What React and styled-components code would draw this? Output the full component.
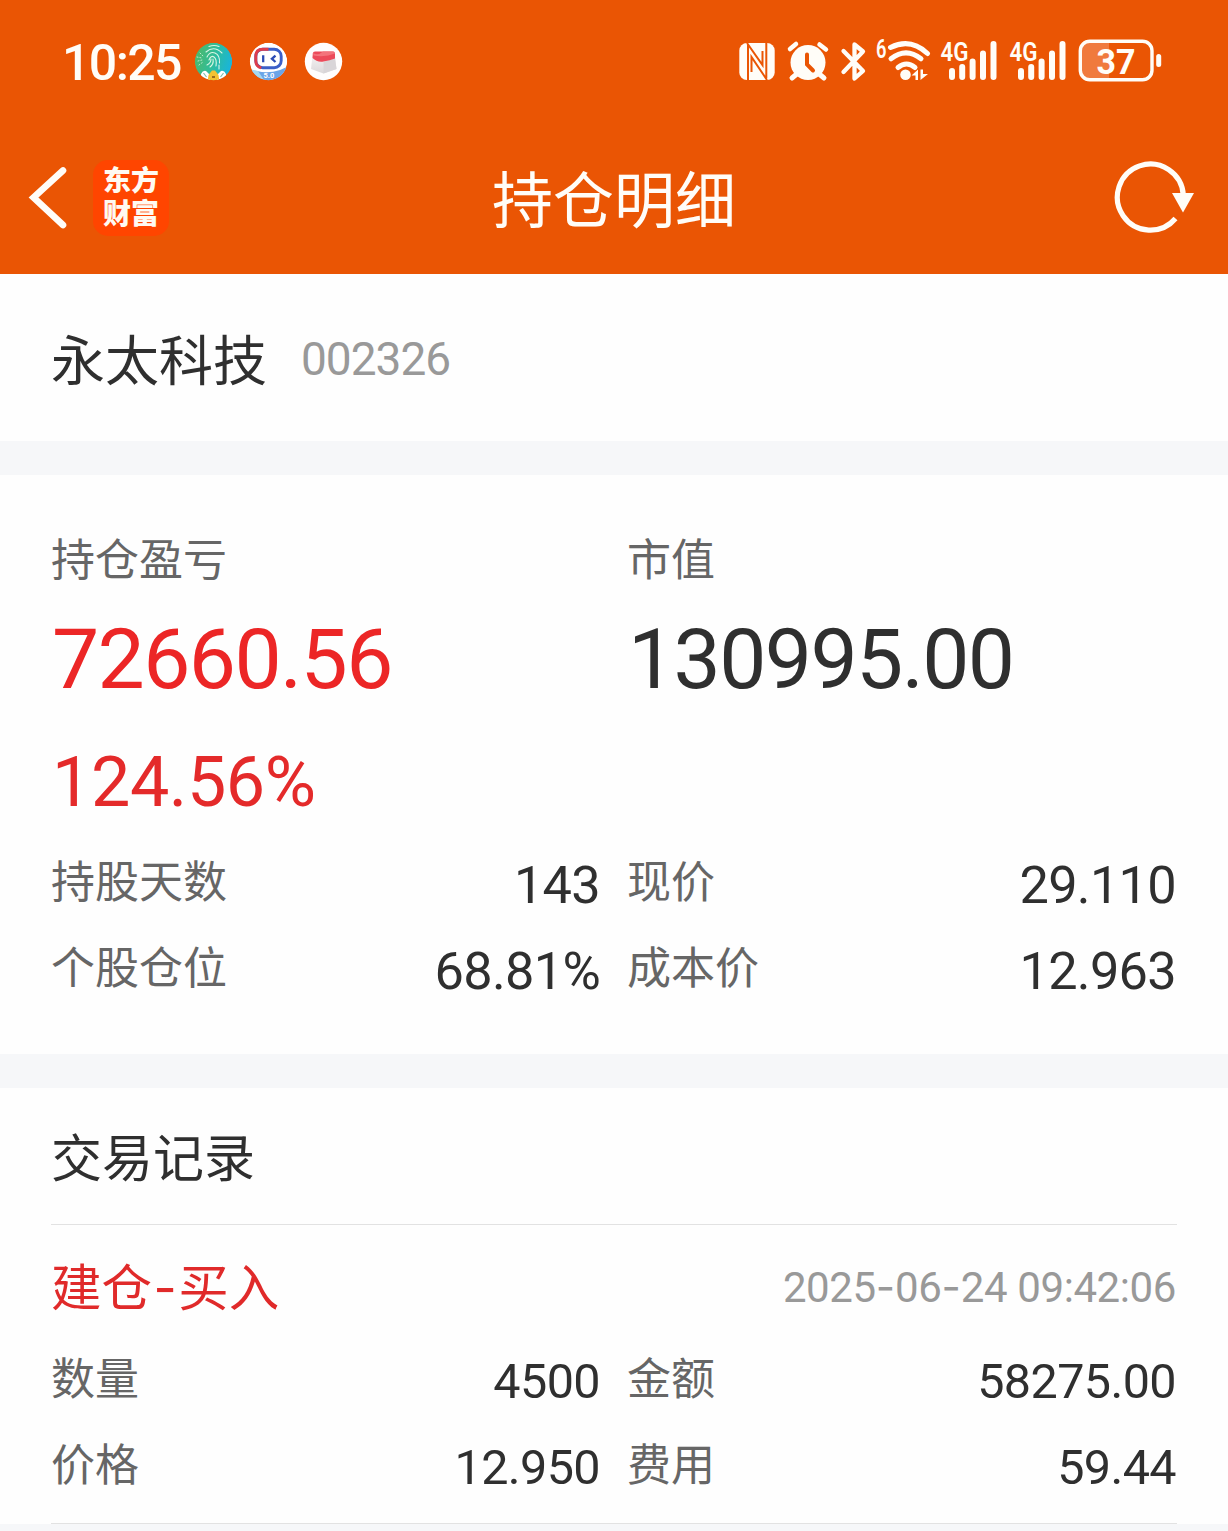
import React from "react";
import styled, { createGlobalStyle } from "styled-components";

const Global = createGlobalStyle`
  body { margin: 0; background: #fff; }
  * { box-sizing: border-box; }
`;
const cjk = `"Noto Sans CJK SC", sans-serif`;
const latin = `Roboto, "Noto Sans CJK SC", sans-serif`;

const Page = styled.div`
  width: 1228px;
  height: 1531px;
  overflow: hidden;
  display: flex;
  flex-direction: column;
  background: #fefefe;
  font-family: ${cjk};
  color: #2f2f2f;
  white-space: nowrap;
`;
const StatusBar = styled.header`
  height: 124px;
  flex: none;
  padding: 0 64px 0 62px;
  display: flex;
  align-items: center;
  justify-content: space-between;
  background: #ea5504;
`;
const StatusGroup = styled.div`
  display: flex;
  align-items: center;
  height: 64px;
`;
const Clock = styled.span`
  width: 132px;
  padding-top: 2px;
  font: 500 50px/64px ${latin};
  letter-spacing: -1.6px;
  color: #fffdf8;
`;
const NavBar = styled.nav`
  height: 150px;
  flex: none;
  display: grid;
  grid-template-columns: 250px 1fr 250px;
  align-items: center;
  background: #ea5504;
`;
const NavLeft = styled.div`
  display: flex;
  align-items: center;
  padding-left: 26px;
  gap: 23px;
`;
const Logo = styled.div`
  width: 76px;
  height: 76px;
  margin-top: -2px;
  padding-top: 3px;
  border-radius: 15px;
  background: #ff4500;
  color: #fffaf2;
  text-align: center;
  font: 900 28px/33px ${cjk};
`;
const NavTitle = styled.h1`
  margin: 0;
  padding-bottom: 5px;
  text-align: center;
  font: 400 61px/72px ${cjk};
  color: #fffdf8;
`;
const NavRight = styled.div`
  display: flex;
  justify-content: flex-end;
  padding: 0 30px 2px 0;
`;
const Stock = styled.section`
  height: 167px;
  flex: none;
  padding: 0 51px;
  display: flex;
  align-items: center;
  gap: 34px;
`;
const StockName = styled.span`
  font: 400 54px/72px ${cjk};
`;
const Num = styled.span`
  font: 400 ${(p) => p.$size}px/${(p) => p.$line || 74}px ${latin};
  font-kerning: none;
  letter-spacing: ${(p) => p.$track || 0}px;
  color: ${(p) => p.$color || "#2f2f2f"};
`;
const StockCode = styled(Num)`
  padding-top: 3px;
`;
const Gap = styled.div`
  height: 34px;
  flex: none;
  background: #f6f7f9;
`;
const Summary = styled.section`
  height: 579px;
  flex: none;
  padding: 48px 51px 0;
`;
const Columns = styled.div`
  display: grid;
  grid-template-columns: 549px 549px;
  column-gap: 27px;
`;
const Metric = styled.div`
  display: flex;
  flex-direction: column;
  gap: 2px;
`;
const Figure = styled(Num)`
  padding-left: 1px;
`;
const Label = styled.span`
  font: 400 44px/68px ${cjk};
  color: #666;
`;
const Rows = styled.div`
  padding-top: ${(p) => p.$top}px;
`;
const Row = styled(Columns)`
  height: 86px;
`;
const Cell = styled.div`
  display: flex;
  justify-content: space-between;
`;
const SectionTitle = styled.h2`
  margin: 0;
  height: 136px;
  flex: none;
  padding-left: 51px;
  font: 400 51px/135px ${cjk};
`;
const Divider = styled.div`
  height: 1px;
  flex: none;
  margin: 0 51px;
  background: #e2e2e2;
`;
const Trade = styled.section`
  height: 298px;
  flex: none;
  padding: 25px 51px 0;
`;
const TradeHead = styled.div`
  height: 86px;
  width: 1125px;
  display: flex;
  justify-content: space-between;
`;
const TradeType = styled.span`
  font: 400 50.5px/68px ${cjk};
  color: #e02a2a;
`;
const Dash = styled.span`
  font-family: Inter, sans-serif;
  letter-spacing: 0;
  padding: 0 ${(p) => p.$pad || 0}px;
`;
const Footer = styled.div`
  flex: 1;
  background: #f6f7f9;
`;

const W = "#fffdf8";

function AppIcons() {
  return (
    <svg width="150" height="40" viewBox="194 42 150 40">
      <defs>
        <linearGradient id="fp" x1="0" y1="0.3" x2="1" y2="0.6">
          <stop offset="0" stopColor="#4fb868" />
          <stop offset="0.5" stopColor="#2fbd9b" />
          <stop offset="1" stopColor="#18b4df" />
        </linearGradient>
        <linearGradient id="box" x1="0" y1="0" x2="0" y2="1">
          <stop offset="0" stopColor="#f3f0f1" />
          <stop offset="1" stopColor="#dcd8da" />
        </linearGradient>
        <clipPath id="c1"><circle cx="213.5" cy="61.5" r="18.7" /></clipPath>
        <clipPath id="c2"><circle cx="268.5" cy="61.5" r="18.7" /></clipPath>
      </defs>
      <g clipPath="url(#c1)">
        <circle cx="213.5" cy="61.5" r="18.7" fill="url(#fp)" />
        <g fill="none" stroke="#d9f5e4" strokeWidth="1.1" strokeLinecap="round">
          <path d="M209 46.5q5-2 10 0M206 52q8-7 16 1M207 57q3-6 8-4q5 2 4.5 10M209 60q2-5 5-3q3 2 2 9M207 65q4-2 4-6M210 67q4-3 3-8M219 65v4" />
          <path d="M197 57l5 1M198 61l4-1M200 53l3 3M199 65l4-3" strokeDasharray="1 2" strokeWidth="0.8" />
        </g>
        <path d="M201 74q2-4 5-3l4 4v7h-9zM226 74q-2-4-5-3l-4 4v7h9z" fill="#fff" />
        <path d="M208.5 75l3.5-4.5h3l3.5 4.5 1 7h-12z" fill="#f3c233" />
        <path d="M212 77h3" stroke="#9b6b1c" strokeWidth="2" />
        <path d="M203.5 73l3 4M223.5 73l-3 4" stroke="#7ac0ae" strokeWidth="1.2" />
      </g>
      <g clipPath="url(#c2)">
        <circle cx="268.5" cy="61.5" r="18.7" fill="#fff" />
        <path d="M249 70l8 1q11 3 23-1l9-4v16h-40z" fill="#6ba5e7" />
        <path d="M249 69l9 2 6 9h-15z" fill="#a6d8ee" />
        <rect x="255.8" y="49.2" width="25.4" height="18.5" rx="7" fill="#fff" stroke="#3b5fc8" strokeWidth="2.9" />
        <path d="M268.5 49.2h-5.7q-7 0-7 7v4.5q0 6 5.5 7" fill="none" stroke="#df3d4c" strokeWidth="2.9" />
        <path d="M263.2 55.3v7M275.5 55.6l-3.6 3.2 3.6 3.2" fill="none" stroke="#2c4cb5" strokeWidth="2.3" />
        <text x="268.8" y="78.2" textAnchor="middle" fontFamily="Roboto, sans-serif" fontWeight="700" fontSize="7.5" fill="#fff">5.0</text>
      </g>
      <circle cx="323.5" cy="61.5" r="18.7" fill="#fffdfd" />
      <path d="M312.5 56h22.5l1.5 13-13 4.5-12.5-4.5z" fill="url(#box)" />
      <path d="M323.5 62v11.5l13-4.5-1.5-11z" fill="#d9d5d8" />
      <path d="M312.8 53.5q.2-2 2.2-2h17.5q2.3 0 2.5 2v5q-5 2-11.5 3t-11-3.5z" fill="#ec4a5a" />
      <path d="M313 53q5 3 10-1.5h11l1 2q-10 4-21.5 2z" fill="#f3737c" />
    </svg>
  );
}

function Signal({ x }) {
  return (
    <g>
      <text x={x - 8.5} y="60.5" fontFamily="Roboto, sans-serif" fontWeight="600" fontSize="25.5" textLength="28" lengthAdjust="spacingAndGlyphs" fill={W}>4G</text>
      <g stroke={W} strokeWidth="6" strokeLinecap="round">
        <path d={`M${x + 3} 71v6M${x + 13.2} 67v10M${x + 23.6} 61.5v15.5M${x + 34} 53.5v23.5M${x + 44.5} 44v33`} />
      </g>
    </g>
  );
}

function SystemIcons() {
  return (
    <svg width="426" height="54" viewBox="738 35 426 54">
      <rect x="739.3" y="43" width="35.4" height="37" rx="7.5" fill={W} />
      <path d="M747 43L762.5 65V51M751.5 72V57L767 80M748 45v35M766.3 43v35" fill="none" stroke="#ea5504" strokeWidth="2" />
      <g fill="none" stroke={W} strokeLinecap="round">
        <circle cx="808" cy="62.5" r="17.5" fill={W} stroke="none" />
        <path d="M790 49l6-5M819.5 44.5l6.5 5" strokeWidth="4.5" />
        <path d="M798 73l-6 5M818 73l6 5" strokeWidth="5" />
        <path d="M807 54.5v10l6 6" stroke="#ea5504" strokeWidth="4" />
        <path d="M843.5 51l19.5 20-8.5 7.5V44.500l8.500 7-19.500 20.500" strokeWidth="4.3" strokeLinejoin="round" />
        <path d="M890.5 47.5q20-10 37 6" strokeWidth="5" />
        <path d="M891 58.8q15-12 30 0" strokeWidth="5" />
        <path d="M898 67.5q8.5-7 17 0" strokeWidth="5" />
      </g>
      <circle cx="905.5" cy="74.8" r="5.3" fill={W} />
      <path d="M911.5 75.5l6.5-6v10.500h-2.500v-4.500zM920.500 69.500h2.500v4.500h5l-7.500 6z" fill={W} />
      <text x="876" y="57.5" fontFamily="Roboto, sans-serif" fontWeight="600" fontSize="25" textLength="10.5" lengthAdjust="spacingAndGlyphs" fill={W}>6</text>
      <Signal x={949} />
      <Signal x={1018} />
      <path d="M1109 42h-17q-11 0-11 11v15q0 11 11 11h17z" fill="#f07a3d" />
      <rect x="1080.3" y="41.2" width="71.7" height="38.6" rx="9.5" fill="none" stroke={W} strokeWidth="3.4" />
      <rect x="1156.2" y="54" width="5" height="13" rx="2.5" fill={W} />
      <text x="1116" y="74" textAnchor="middle" fontFamily="Roboto, sans-serif" fontWeight="700" fontSize="35" textLength="39" lengthAdjust="spacingAndGlyphs" fill={W}>37</text>
    </svg>
  );
}

function BackIcon() {
  return (
    <svg width="44" height="64" viewBox="26 167 44 64">
      <path d="M63 170.5L33.5 197.5l29.5 27.5" fill="none" stroke={W} strokeWidth="6.6" strokeLinecap="round" strokeLinejoin="miter" />
    </svg>
  );
}

function RefreshIcon() {
  return (
    <svg width="86" height="80" viewBox="1112 159 86 80">
      <path d="M1175.5 219.5A33 33 0 1 1 1183.3 196" fill="none" stroke={W} strokeWidth="5.2" />
      <path d="M1172 194h22l-11 19.5z" fill={W} />
    </svg>
  );
}

function Pair({ label, value, size = 52.3, track = -0.7, line = 80 }) {
  return (
    <Cell>
      <Label>{label}</Label>
      <Num $size={size} $line={line} $track={track}>{value}</Num>
    </Cell>
  );
}

const tradeNum = { size: 48.5, track: -0.6, line: 79 };

export default function App() {
  return (
    <Page>
      <Global />
      <StatusBar>
        <StatusGroup>
          <Clock>10:25</Clock>
          <AppIcons />
        </StatusGroup>
        <SystemIcons />
      </StatusBar>
      <NavBar>
        <NavLeft>
          <BackIcon />
          <Logo>东方<br />财富</Logo>
        </NavLeft>
        <NavTitle>持仓明细</NavTitle>
        <NavRight><RefreshIcon /></NavRight>
      </NavBar>
      <Stock>
        <StockName>永太科技</StockName>
        <StockCode $size={46} $track={-1} $line={74} $color="#999">002326</StockCode>
      </Stock>
      <Gap />
      <Summary>
        <Columns>
          <Metric>
            <Label>持仓盈亏</Label>
            <Figure $size={84} $line={134} $track={-1.6} $color="#ec2626">72660.56</Figure>
            <Figure $size={70} $line={106} $track={-0.4} $color="#e42a2a">124.56%</Figure>
          </Metric>
          <Metric>
            <Label>市值</Label>
            <Figure $size={84} $line={134} $track={-1.6}>130995.00</Figure>
          </Metric>
        </Columns>
        <Rows $top={10}>
          <Row>
            <Pair label="持股天数" value="143" />
            <Pair label="现价" value="29.110" />
          </Row>
          <Row>
            <Pair label="个股仓位" value="68.81%" />
            <Pair label="成本价" value="12.963" />
          </Row>
        </Rows>
      </Summary>
      <Gap />
      <SectionTitle>交易记录</SectionTitle>
      <Divider />
      <Trade>
        <TradeHead>
          <TradeType>建仓<Dash $pad={1.5}>-</Dash>买入</TradeType>
          <Num $size={42} $line={74} $track={-0.4} $color="#999">
            2025<Dash>-</Dash>06<Dash>-</Dash>24 09:42:06
          </Num>
        </TradeHead>
        <Rows $top={6}>
          <Row>
            <Pair label="数量" value="4500" {...tradeNum} />
            <Pair label="金额" value="58275.00" {...tradeNum} />
          </Row>
          <Row>
            <Pair label="价格" value="12.950" {...tradeNum} />
            <Pair label="费用" value="59.44" {...tradeNum} />
          </Row>
        </Rows>
      </Trade>
      <Divider />
      <Footer />
    </Page>
  );
}
